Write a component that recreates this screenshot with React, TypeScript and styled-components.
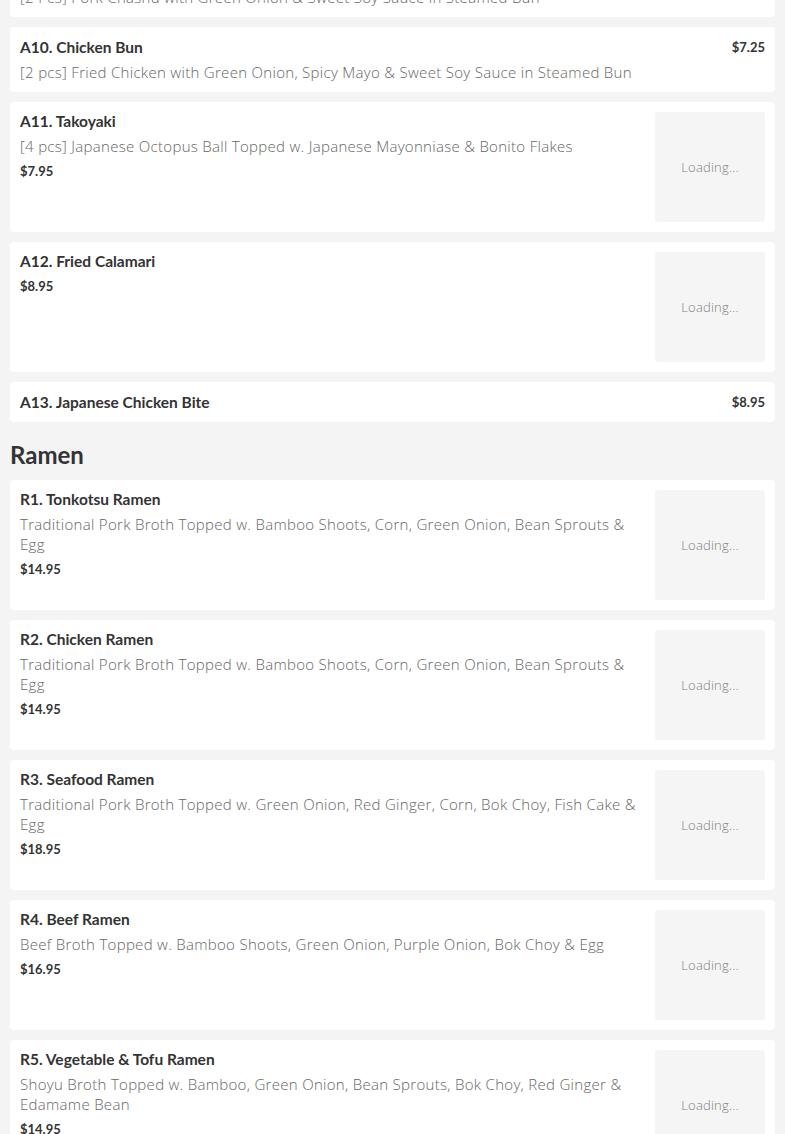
import React from "react";
import styled, { createGlobalStyle } from "styled-components";

const GlobalStyle = createGlobalStyle`
  html, body {
    margin: 0;
    padding: 0;
    background: #f4f4f4;
    overflow: hidden;
  }
  * {
    box-sizing: border-box;
  }
`;

const Page = styled.div`
  display: flex;
  flex-direction: column;
  gap: 10px;
  padding: 0 10px;
  margin-top: -48px;
`;

const Card = styled.div`
  display: flex;
  gap: 10px;
  background: #ffffff;
  border-radius: 4px;
  padding: 10px;
`;

const Info = styled.div`
  flex: 1;
  display: flex;
  flex-direction: column;
  min-width: 0;
`;

const TitleRow = styled.div`
  display: flex;
  justify-content: space-between;
  align-items: center;
`;

const Title = styled.div`
  font-family: "Lato", "Open Sans", sans-serif;
  font-weight: 700;
  font-size: 15.5px;
  line-height: 19px;
  color: #333333;
`;

const Desc = styled.div`
  margin-top: 5px;
  font-family: "Open Sans", sans-serif;
  font-weight: 300;
  font-size: 15px;
  letter-spacing: 0.3px;
  line-height: 20px;
  color: #666666;
`;

const Price = styled.div<{ $inline?: boolean }>`
  margin-top: ${(p) => (p.$inline ? "0" : "5px")};
  font-family: "Lato", "Open Sans", sans-serif;
  font-weight: 700;
  font-size: 13px;
  line-height: 20px;
  color: #333333;
`;

const Thumb = styled.div`
  flex: 0 0 110px;
  width: 110px;
  height: 110px;
  background: #f5f5f5;
  border-radius: 3px;
  display: flex;
  align-items: center;
  justify-content: center;
  font-family: "Open Sans", sans-serif;
  font-weight: 300;
  font-size: 13px;
  letter-spacing: 0.2px;
  color: #808080;
`;

const Heading = styled.h2`
  margin: 8px 0 0;
  font-family: "Lato", "Open Sans", sans-serif;
  font-weight: 700;
  font-size: 24px;
  line-height: 30px;
  color: #333333;
`;

type Item = {
  name: string;
  desc?: string;
  price: string;
  image?: boolean;
};

const appetizers: Item[] = [
  {
    name: "A9. Pork Bun",
    desc: "[2 Pcs] Pork Chashu with Green Onion & Sweet Soy Sauce in Steamed Bun",
    price: "$6.95",
  },
  {
    name: "A10. Chicken Bun",
    desc: "[2 pcs] Fried Chicken with Green Onion, Spicy Mayo & Sweet Soy Sauce in Steamed Bun",
    price: "$7.25",
  },
  {
    name: "A11. Takoyaki",
    desc: "[4 pcs] Japanese Octopus Ball Topped w. Japanese Mayonniase & Bonito Flakes",
    price: "$7.95",
    image: true,
  },
  { name: "A12. Fried Calamari", price: "$8.95", image: true },
  { name: "A13. Japanese Chicken Bite", price: "$8.95" },
];

const ramen: Item[] = [
  {
    name: "R1. Tonkotsu Ramen",
    desc: "Traditional Pork Broth Topped w. Bamboo Shoots, Corn, Green Onion, Bean Sprouts & Egg",
    price: "$14.95",
    image: true,
  },
  {
    name: "R2. Chicken Ramen",
    desc: "Traditional Pork Broth Topped w. Bamboo Shoots, Corn, Green Onion, Bean Sprouts & Egg",
    price: "$14.95",
    image: true,
  },
  {
    name: "R3. Seafood Ramen",
    desc: "Traditional Pork Broth Topped w. Green Onion, Red Ginger, Corn, Bok Choy, Fish Cake & Egg",
    price: "$18.95",
    image: true,
  },
  {
    name: "R4. Beef Ramen",
    desc: "Beef Broth Topped w. Bamboo Shoots, Green Onion, Purple Onion, Bok Choy & Egg",
    price: "$16.95",
    image: true,
  },
  {
    name: "R5. Vegetable & Tofu Ramen",
    desc: "Shoyu Broth Topped w. Bamboo, Green Onion, Bean Sprouts, Bok Choy, Red Ginger & Edamame Bean",
    price: "$14.95",
    image: true,
  },
];

function MenuCard({ item }: { item: Item }) {
  if (!item.image) {
    return (
      <Card>
        <Info>
          <TitleRow>
            <Title>{item.name}</Title>
            <Price $inline>{item.price}</Price>
          </TitleRow>
          {item.desc && <Desc>{item.desc}</Desc>}
        </Info>
      </Card>
    );
  }
  return (
    <Card>
      <Info>
        <Title>{item.name}</Title>
        {item.desc && <Desc>{item.desc}</Desc>}
        <Price>{item.price}</Price>
      </Info>
      <Thumb>Loading...</Thumb>
    </Card>
  );
}

export default function App() {
  return (
    <>
      <GlobalStyle />
      <Page>
        {appetizers.map((item) => (
          <MenuCard key={item.name} item={item} />
        ))}
        <Heading>Ramen</Heading>
        {ramen.map((item) => (
          <MenuCard key={item.name} item={item} />
        ))}
      </Page>
    </>
  );
}
